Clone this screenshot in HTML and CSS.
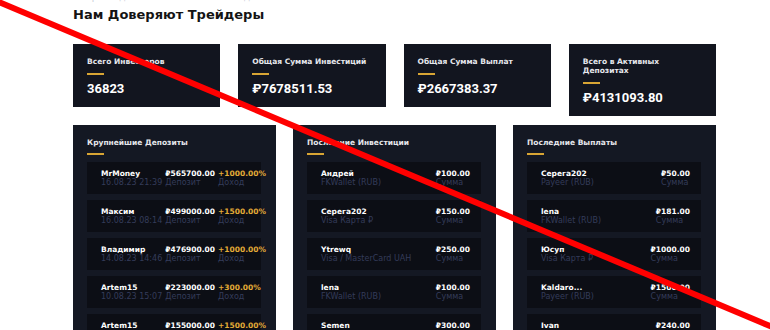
FILE: index.html
```html
<!DOCTYPE html>
<html lang="ru">
<head>
<meta charset="utf-8">
<title>Нам Доверяют Трейдеры</title>
<link rel="stylesheet" href="styles.css">
</head>
<body>
<div class="page">
  <section class="wrap">
    <p class="kicker">Присоединяйтесь к нашей команде</p>
    <h2 class="heading">Нам Доверяют Трейдеры</h2>

    <div class="stats">
      <div class="stat">
        <div class="stat-title">Всего Инвесторов</div>
        <div class="bar"></div>
        <div class="stat-value">36823</div>
      </div>
      <div class="stat">
        <div class="stat-title">Общая Сумма Инвестиций</div>
        <div class="bar"></div>
        <div class="stat-value">₽7678511.53</div>
      </div>
      <div class="stat">
        <div class="stat-title">Общая Сумма Выплат</div>
        <div class="bar"></div>
        <div class="stat-value">₽2667383.37</div>
      </div>
      <div class="stat">
        <div class="stat-title">Всего в Активных<br>Депозитах</div>
        <div class="bar"></div>
        <div class="stat-value">₽4131093.80</div>
      </div>
    </div>

    <div class="panels">
      <div class="panel">
        <div class="panel-title">Крупнейшие Депозиты</div>
        <div class="bar"></div>
        <div class="rows">
          <div class="row row-dep">
            <div class="cell"><span class="main">MrMoney</span><span class="sub">16.08.23 21:39</span></div>
            <div class="cell"><span class="main">₽565700.00</span><span class="sub">Депозит</span></div>
            <div class="cell"><span class="main gold">+1000.00%</span><span class="sub">Доход</span></div>
          </div>
          <div class="row row-dep">
            <div class="cell"><span class="main">Максим</span><span class="sub">16.08.23 08:14</span></div>
            <div class="cell"><span class="main">₽499000.00</span><span class="sub">Депозит</span></div>
            <div class="cell"><span class="main gold">+1500.00%</span><span class="sub">Доход</span></div>
          </div>
          <div class="row row-dep">
            <div class="cell"><span class="main">Владимир</span><span class="sub">14.08.23 14:46</span></div>
            <div class="cell"><span class="main">₽476900.00</span><span class="sub">Депозит</span></div>
            <div class="cell"><span class="main gold">+1000.00%</span><span class="sub">Доход</span></div>
          </div>
          <div class="row row-dep">
            <div class="cell"><span class="main">Artem15</span><span class="sub">10.08.23 15:07</span></div>
            <div class="cell"><span class="main">₽223000.00</span><span class="sub">Депозит</span></div>
            <div class="cell"><span class="main gold">+300.00%</span><span class="sub">Доход</span></div>
          </div>
          <div class="row row-dep">
            <div class="cell"><span class="main">Artem15</span><span class="sub">10.08.23 13:18</span></div>
            <div class="cell"><span class="main">₽155000.00</span><span class="sub">Депозит</span></div>
            <div class="cell"><span class="main gold">+1500.00%</span><span class="sub">Доход</span></div>
          </div>
        </div>
      </div>

      <div class="panel">
        <div class="panel-title">Последние Инвестиции</div>
        <div class="bar"></div>
        <div class="rows">
          <div class="row row-pay">
            <div class="cell"><span class="main">Андрей</span><span class="sub">FKWallet (RUB)</span></div>
            <div class="cell"><span class="main">₽100.00</span><span class="sub">Сумма</span></div>
          </div>
          <div class="row row-pay">
            <div class="cell"><span class="main">Серега202</span><span class="sub">Visa Карта ₽</span></div>
            <div class="cell"><span class="main">₽150.00</span><span class="sub">Сумма</span></div>
          </div>
          <div class="row row-pay">
            <div class="cell"><span class="main">Ytrewq</span><span class="sub">Visa / MasterCard UAH</span></div>
            <div class="cell"><span class="main">₽250.00</span><span class="sub">Сумма</span></div>
          </div>
          <div class="row row-pay">
            <div class="cell"><span class="main">lena</span><span class="sub">FKWallet (RUB)</span></div>
            <div class="cell"><span class="main">₽100.00</span><span class="sub">Сумма</span></div>
          </div>
          <div class="row row-pay">
            <div class="cell"><span class="main">Semen</span><span class="sub">Visa / MasterCard UAH</span></div>
            <div class="cell"><span class="main">₽300.00</span><span class="sub">Сумма</span></div>
          </div>
        </div>
      </div>

      <div class="panel">
        <div class="panel-title">Последние Выплаты</div>
        <div class="bar"></div>
        <div class="rows">
          <div class="row row-pay">
            <div class="cell"><span class="main">Серега202</span><span class="sub">Payeer (RUB)</span></div>
            <div class="cell"><span class="main">₽50.00</span><span class="sub">Сумма</span></div>
          </div>
          <div class="row row-pay">
            <div class="cell"><span class="main">lena</span><span class="sub">FKWallet (RUB)</span></div>
            <div class="cell"><span class="main">₽181.00</span><span class="sub">Сумма</span></div>
          </div>
          <div class="row row-pay">
            <div class="cell"><span class="main">Юсуп</span><span class="sub">Visa Карта ₽</span></div>
            <div class="cell"><span class="main">₽1000.00</span><span class="sub">Сумма</span></div>
          </div>
          <div class="row row-pay">
            <div class="cell"><span class="main">Kaldaro...</span><span class="sub">Payeer (RUB)</span></div>
            <div class="cell"><span class="main">₽1500.00</span><span class="sub">Сумма</span></div>
          </div>
          <div class="row row-pay">
            <div class="cell"><span class="main">Ivan</span><span class="sub">Visa Карта ₽</span></div>
            <div class="cell"><span class="main">₽240.00</span><span class="sub">Сумма</span></div>
          </div>
        </div>
      </div>
    </div>
  </section>

  <svg class="strike" width="770" height="330" viewBox="0 0 770 330" aria-hidden="true">
    <line x1="-10" y1="-1.7" x2="780" y2="330.2" stroke="#ff0000" stroke-width="6"/>
  </svg>
</div>
</body>
</html>
```
FILE: styles.css
```css
* { box-sizing: border-box; }

html, body {
  margin: 0;
  padding: 0;
  background: #ffffff;
}

body {
  font-family: "DejaVu Sans", "Noto Sans", sans-serif;
  overflow: hidden;
  width: 770px;
  height: 330px;
}

.page {
  position: relative;
  width: 770px;
  height: 330px;
  overflow: hidden;
}

.wrap {
  width: 643px;
  margin-left: 73px;
}

.kicker {
  margin: -8px 0 0 12px;
  height: 11px;
  font-size: 9px;
  line-height: 11px;
  color: #c9cbd6;
}

.heading {
  margin: 4px 0 0 0;
  font-size: 13px;
  line-height: 16px;
  font-weight: bold;
  color: #141414;
}

.stats {
  margin-top: 21px;
  display: grid;
  grid-template-columns: repeat(4, minmax(0, 1fr));
  column-gap: 18px;
  align-items: start;
}

.stat {
  background: #12151f;
  padding: 13px 14px 10px 14px;
}

.stat-title {
  font-size: 7.5px;
  line-height: 9px;
  font-weight: bold;
  color: #e6e7ec;
}

.bar {
  width: 17px;
  height: 2px;
  background: #d8a534;
  margin-top: 7px;
}

.stat-value {
  margin-top: 6px;
  font-family: Roboto, "Liberation Sans", sans-serif;
  font-size: 13px;
  line-height: 16px;
  font-weight: bold;
  color: #ffffff;
}

.panels {
  margin-top: 9px;
  display: grid;
  grid-template-columns: repeat(3, minmax(0, 1fr));
  column-gap: 17px;
  align-items: start;
}

.panel {
  background: #141823;
  padding: 13px 15px 14px 14px;
  height: 230px;
  min-width: 0;
}

.panel-title {
  font-size: 7.5px;
  line-height: 9px;
  font-weight: bold;
  color: #e6e7ec;
}

.panel .bar {
  margin-top: 6px;
}

.rows {
  margin-top: 7px;
  display: flex;
  flex-direction: column;
  gap: 6px;
}

.row {
  height: 32px;
  min-width: 0;
  background: #0c0e15;
  display: flex;
  align-items: center;
  padding: 0 11px 0 14px;
}

.row-dep {
  gap: 3px;
  white-space: nowrap;
}

.row-pay {
  justify-content: space-between;
}

.cell {
  display: flex;
  flex-direction: column;
  flex-shrink: 0;
  white-space: nowrap;
}

.main {
  font-size: 7.5px;
  line-height: 9px;
  font-weight: bold;
  color: #ffffff;
}

.main.gold {
  color: #e3ab37;
}

.sub {
  font-size: 8px;
  line-height: 9px;
  color: #343c5a;
}

.strike {
  position: absolute;
  left: 0;
  top: 0;
  pointer-events: none;
}
```
